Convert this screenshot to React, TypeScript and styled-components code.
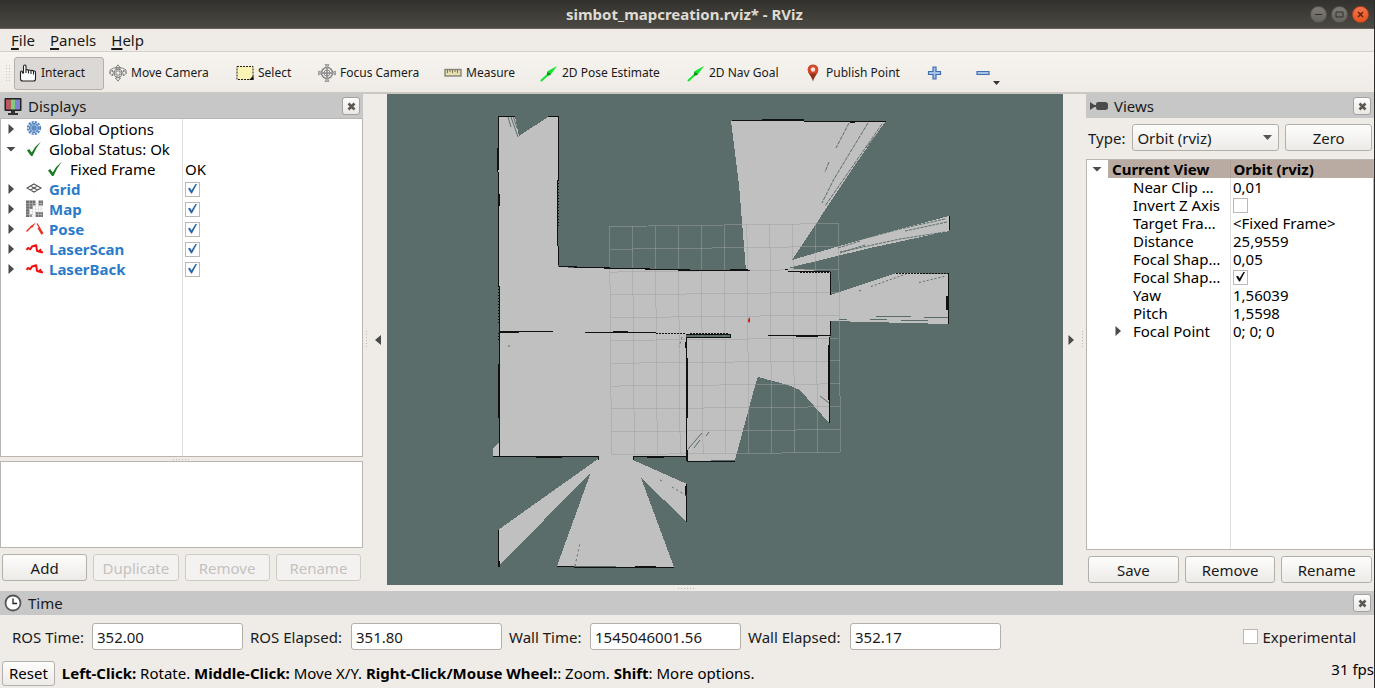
import React from "react";
import styled, { createGlobalStyle, css } from "styled-components";

const GlobalStyle = createGlobalStyle`
  *, *::before, *::after { box-sizing: border-box; }
  body {
    margin: 0;
    background: #efebe7;
    color: #1a1a1a;
    font-family: "Noto Sans", "Open Sans", sans-serif;
    font-size: 15px;
    line-height: 20px;
  }
  button, input, select { font: inherit; color: inherit; margin: 0; }
`;

const Window = styled.div`
  display: flex;
  flex-direction: column;
  min-height: 100vh;
  border-right: 1px solid #2b2b2b;
`;

const TitleBar = styled.header`
  display: grid;
  grid-template-columns: 1fr auto 1fr;
  align-items: center;
  height: 29px;
  padding-right: 5px;
  background: linear-gradient(#33312d, #4b4943);
  border-bottom: 1px solid #6b5f5a;
`;

const WindowTitle = styled.h1`
  grid-column: 2;
  margin: 0;
  font-size: 15px;
  line-height: 20px;
  font-weight: 700;
  color: #dfdbd2;
`;

const WindowControls = styled.div`
  display: flex;
  justify-content: flex-end;
  gap: 4px;
`;

const WindowButton = styled.button<{ $close?: boolean }>`
  display: flex;
  width: 17px;
  height: 17px;
  padding: 0;
  border: 1px solid ${(p) => (p.$close ? "#b5431c" : "#55534c")};
  border-radius: 50%;
  background: ${(p) => (p.$close ? "linear-gradient(#f4744b, #e6531f)" : "linear-gradient(#7d7b74, #65635c)")};
`;

const MenuBar = styled.nav`
  display: flex;
  align-items: center;
  gap: 15px;
  height: 23px;
  padding-left: 11px;
  border-bottom: 1px solid #d3cfca;
`;

const MenuButton = styled.button`
  padding: 0;
  border: 0;
  background: none;
  u { text-underline-offset: 2px; text-decoration-thickness: 2px; }
`;

const ToolBar = styled.div`
  display: flex;
  align-items: center;
  height: 42px;
  padding: 2px 0 0 5px;
  background: linear-gradient(#f7f4f0, #efebe6);
  border-bottom: 2px solid #cbc7c3;
`;

const Grip = styled.span`
  width: 5px;
  height: 18px;
  margin-right: 4px;
  background-image: radial-gradient(circle, #cbc6c0 1px, transparent 1px);
  background-size: 3px 3px;
`;

const Tool = styled.button<{ $width: number; $active?: boolean; $menu?: boolean }>`
  display: flex;
  align-items: center;
  gap: ${(p) => (p.$menu ? 0 : 4)}px;
  flex: none;
  width: ${(p) => p.$width}px;
  height: 33px;
  padding: 0 4px;
  border: 1px solid transparent;
  border-radius: 3px;
  background: none;
  font-size: 12px;
  white-space: nowrap;
  ${(p) =>
    p.$active &&
    css`
      border-color: #b3afab;
      background: #dcd8d5;
    `}
`;

const ToolIcon = styled.svg`
  flex: none;
  width: 18px;
  height: 18px;
`;

const MenuArrow = styled.svg`
  flex: none;
  align-self: flex-end;
  margin-bottom: 4px;
  width: 7px;
  height: 4px;
`;

const Main = styled.main`
  display: grid;
  grid-template-columns: 363px 24px minmax(0, 1fr) 23px 288px;
  flex: 1;
`;

const Dock = styled.section`
  display: flex;
  flex-direction: column;
  min-width: 0;
`;

const DockTitle = styled.header`
  display: flex;
  align-items: center;
  gap: 6px;
  flex: none;
  height: 24px;
  padding: 0 3px 0 4px;
  background: #c7c7c7;
  h2 { flex: 1; margin: 0; font-size: 15px; font-weight: 400; }
`;

const DockIcon = styled.svg`
  width: 18px;
  height: 18px;
`;

const CloseButton = styled.button`
  display: flex;
  align-items: center;
  justify-content: center;
  width: 18px;
  height: 18px;
  padding: 0;
  border: 1px solid #a5a19d;
  border-radius: 3px;
  background: linear-gradient(#fdfdfc, #ebe8e5);
`;

const TreePanel = styled.div<{ $split: number }>`
  flex: 1;
  min-height: 0;
  border: 1px solid #bab5b0;
  background: linear-gradient(#e0e0e0, #e0e0e0) ${(p) => p.$split}px 0 / 1px 100% no-repeat #fff;
`;

const Tree = styled.table<{ $first: number; $row: number }>`
  width: 100%;
  table-layout: fixed;
  border-collapse: collapse;
  color: #000;
  th, td {
    height: ${(p) => p.$row}px;
    padding: 0;
    line-height: ${(p) => p.$row}px;
    font-weight: 400;
    text-align: left;
    white-space: nowrap;
  }
  th { width: ${(p) => p.$first}px; }
  td { padding-left: 3px; }
`;

const Cell = styled.div<{ $pad: number }>`
  display: flex;
  align-items: center;
  padding-left: ${(p) => p.$pad}px;
`;

const Name = styled.span<{ $display?: boolean }>`
  ${(p) => p.$display && css`color: #2b7bc9; font-weight: 700;`}
`;

const Expander = styled.svg`
  flex: none;
  width: 12px;
  height: 12px;
`;

const RowIcon = styled.svg`
  flex: none;
  width: 18px;
  height: 18px;
  margin: 0 5px 0 9px;
`;

const CurrentRow = styled.tr`
  th, td { font-weight: 700; }
  th { background: linear-gradient(#b9aba1, #b9aba1) 21px 0 no-repeat; }
  td { background: #b9aba1; border-left: 1px solid #aea197; }
`;

const Check = styled.input<{ $tint?: string }>`
  appearance: none;
  display: block;
  width: 15px;
  height: 15px;
  border: 1px solid #bcb8b4;
  background: #fff;
  &:checked::after {
    content: "";
    display: block;
    width: 9px;
    height: 10px;
    margin: 1px 2px;
    background: ${(p) => p.$tint ?? "#111"};
    clip-path: polygon(0 50%, 22% 42%, 40% 68%, 86% 0, 100% 4%, 44% 100%, 34% 100%);
  }
`;

const SplitHandle = styled.div<{ $size: number }>`
  display: flex;
  align-items: center;
  justify-content: center;
  flex: none;
  height: ${(p) => p.$size}px;
`;

const Dots = styled.span<{ $vertical?: boolean }>`
  flex: none;
  width: ${(p) => (p.$vertical ? 1 : 18)}px;
  height: ${(p) => (p.$vertical ? 18 : 1)}px;
  background: repeating-linear-gradient(${(p) => (p.$vertical ? "180deg" : "90deg")}, #bdb8b3 0 1px, transparent 1px 3px);
`;

const SideStrip = styled.div<{ $reverse?: boolean }>`
  display: flex;
  flex-direction: ${(p) => (p.$reverse ? "row-reverse" : "row")};
  align-items: center;
  gap: 5px;
  padding: 0 3px;
`;

const CollapseButton = styled.button`
  display: flex;
  padding: 0;
  border: 0;
  background: none;
`;

const Description = styled.div`
  flex: none;
  height: 87px;
  border: 1px solid #bab5b0;
  background: #fff;
`;

const ButtonRow = styled.div<{ $bottom: number }>`
  display: flex;
  gap: 6px;
  flex: none;
  padding: 6px 2px ${(p) => p.$bottom}px;
`;

const PushButton = styled.button<{ $compact?: boolean }>`
  flex: ${(p) => (p.$compact ? "none" : "1 1 0")};
  height: ${(p) => (p.$compact ? 25 : 27)}px;
  padding: 0 6px;
  border: 1px solid #b3afab;
  border-radius: 3px;
  background: linear-gradient(#fdfdfc, #edebe8);
  line-height: 20px;
  &:disabled { color: #c4c1be; border-color: #cfcbc7; background: #f4f2f0; }
`;

const TypeRow = styled.div`
  display: flex;
  align-items: center;
  padding: 6px 2px 8px;
`;

const SelectBox = styled.div`
  display: flex;
  align-items: center;
  flex: 0 1 147px;
  height: 27px;
  margin: 0 6px 0 7px;
  border: 1px solid #b3afab;
  border-radius: 3px;
  background: linear-gradient(#fdfdfc, #edebe8);
  select {
    appearance: none;
    flex: 1;
    min-width: 0;
    height: 25px;
    padding: 0 4px;
    border: 0;
    background: none;
  }
  svg { width: 9px; height: 5px; margin-right: 6px; }
`;

const Viewport = styled.section`
  min-width: 0;
  background: #5a6d6a;
  svg { display: block; width: 100%; height: 100%; }
`;

const TimeRow = styled.form`
  display: flex;
  align-items: center;
  height: 43px;
  padding: 0 18px 0 12px;
`;

const TimeLabel = styled.label<{ $width: number }>`
  flex: none;
  width: ${(p) => p.$width}px;
  white-space: nowrap;
`;

const TimeInput = styled.input`
  flex: 0 1 151px;
  min-width: 0;
  height: 27px;
  margin-right: 7px;
  padding: 0 4px;
  border: 1px solid #b3afab;
  border-radius: 3px;
  background: #fff;
`;

const ExperimentalLabel = styled.label`
  display: flex;
  align-items: center;
  gap: 5px;
  margin-left: auto;
`;

const StatusBar = styled.footer`
  display: flex;
  align-items: center;
  gap: 7px;
  height: 30px;
  padding: 0 0 0 2px;
  color: #000;
`;

const HelpText = styled.p`
  flex: 1;
  margin: 0;
`;

const Fps = styled.output`
  align-self: flex-start;
  padding-top: 1px;
`;

const Cross = () => (
  <svg width="9" height="9" viewBox="0 0 9 9" aria-hidden="true">
    <path d="M1.500 1.500 7.500 7.500M7.500 1.500 1.500 7.500" stroke="#5c5955" strokeWidth="2.600" />
  </svg>
);

const Arrow = ({ dir }: { dir: "right" | "down" | "left" }) => (
  <path
    d={dir === "right" ? "M3.500 1v10L9 6z" : dir === "left" ? "M9 1v10L3 6z" : "M1.500 4h9L6 8.500z"}
    fill="#4a4a4a"
  />
);

const arrowGreen = (
  <>
    <path d="M1.500 16.500 9 9.500" stroke="#12e62f" strokeWidth="2" strokeLinecap="round" />
    <path d="M17 2 7 7.500 8.500 8.500 8 11.500 11.500 9.500z" fill="#12e62f" />
    <path d="M7 8 10 9l1 2-4 .5z" fill="#0b8f1e" />
  </>
);

const toolIcons: Record<string, React.ReactNode> = {
  hand: (
    <path
      d="M4.500 9.500V2.500Q4.500 1 5.800 1T7 2.500V6q1.300-.8 2.500.3 1.300-.8 2.500.3 1.300-.7 2.500.4 2-.4 2 1.500V15q0 2-2 2H4Q1.500 17 1.500 15V8.500Q1.500 7 2.500 7 3.500 7 3.500 9.500M7 6v3M9.500 6.500v3M12 7v3M14.500 7.500v3"
      fill="#fff"
      stroke="#222"
      strokeWidth="1.100"
    />
  ),
  move: (
    <g fill="#f4f2ef" stroke="#777" strokeWidth=".9">
      <path d="M9 .8 11.500 4H10v4h4.500V6L17.500 9l-3 3v-2H10v4h1.500L9 17.200 6.500 14H8v-4H3.500v2l-3-3 3-3v2H8V4H6.500z" />
      <path d="M1 6q3-2.500 8-2.500T17 6v3.500M1 6v3.500M5 9q0-4 4-4t4 4q0 4-4 5-4-1-4-5z" fill="none" />
    </g>
  ),
  select: (
    <>
      <rect x="1" y="2.500" width="16" height="13" fill="#fbf4b5" stroke="#222" strokeDasharray="2 1" />
      <path d="M17.500 11.500v4.500h-4.500z" fill="#111" />
    </>
  ),
  focus: (
    <g fill="none" stroke="#8b8b8b">
      <circle cx="9" cy="9" r="5.500" strokeWidth="1.500" />
      <circle cx="9" cy="9" r="3" />
      <path d="M7 .5h4L9.500 4v10l1.500 3.500H7L8.500 14V4zM.5 7v4L4 9.500h10l3.500 1.500V7L14 8.500H4z" fill="#b5b5b5" strokeWidth=".7" />
    </g>
  ),
  ruler: (
    <>
      <rect x="1" y="5.500" width="16" height="6.500" fill="#e7dfae" stroke="#85827b" strokeWidth="1.400" />
      <path d="M3.500 6v3M6 6v2M8.500 6v3M11 6v2M13.500 6v3" stroke="#77735f" />
    </>
  ),
  arrow: arrowGreen,
  pin: (
    <>
      <path d="M6 .8C2.700.8.8 3 .8 6 .8 9.500 4.500 12 6 17.500 7.500 12 11.200 9.500 11.200 6 11.200 3 9.300.8 6 .8z" fill="#8c3519" />
      <path d="M6 .8C2.700.8.8 3 .8 6q0 2 1.200 3.500h8Q11.200 8 11.200 6c0-3-1.900-5.200-5.200-5.200z" fill="#d5492a" />
      <circle cx="6" cy="5.500" r="2.200" fill="#f5e5df" />
    </>
  ),
};

const tools = [
  { icon: "hand", label: "Interact", width: 90, active: true },
  { icon: "move", label: "Move Camera", width: 127 },
  { icon: "select", label: "Select", width: 82 },
  { icon: "focus", label: "Focus Camera", width: 126 },
  { icon: "ruler", label: "Measure", width: 96 },
  { icon: "arrow", label: "2D Pose Estimate", width: 147 },
  { icon: "arrow", label: "2D Nav Goal", width: 117 },
  { icon: "pin", label: "Publish Point", width: 122 },
];

const rowIcons: Record<string, React.ReactNode> = {
  gear: (
    <g fill="none" stroke="#4d80bd" transform="translate(-1 -1)">
      <circle cx="9" cy="9" r="6.200" strokeWidth="1.800" strokeDasharray="2.200 1.050" />
      <circle cx="9" cy="9" r="4.500" fill="#9dbce0" strokeWidth="1.200" />
      <circle cx="9" cy="9" r="1.800" fill="#e8f0f9" />
      <path d="M9 4v10M4 9h10M5.500 5.500l7 7M12.500 5.500l-7 7" strokeWidth=".7" />
    </g>
  ),
  check: <path d="M1 10.500 3.200 9l2.500 3.500Q9 6 15 1.500 10 7.500 6.500 16H5z" fill="#1d7a25" />,
  grid: (
    <path
      d="M8 4 15 8 8 12 1 8zM4.500 6l7 4M11.500 6l-7 4"
      fill="none"
      stroke="#555"
      strokeWidth="1.100"
    />
  ),
  map: (
    <>
      <path d="M0 .5h9.500v5H7V9H3.500v8H0zM12.500.5H17v5h-4.500zM9.500 12H17v5H9.500z" fill="#6f6f6f" />
      <path d="M3.500 14H6v3H3.500z" fill="#999" />
      <path d="M3.500 .5v16.500M6.500 .5v16.500M9.500 5v12M12.500 .5v16.500M15 .5v16.500M0 3.500h17M0 6h17M0 9h17M0 12h17M0 14.500h17" stroke="#ccc" strokeWidth=".5" />
    </>
  ),
  pose: (
    <g fill="none" stroke="#e8321a">
      <path d="M.5 11.500 5 7" strokeWidth="1.500" />
      <path d="M10 2.500 4 6.500 6 8z" fill="#e8321a" stroke="none" />
      <path d="M11 3.500 14 8.500" strokeWidth="1.300" />
      <path d="M12.500 7.500 16.500 14" strokeWidth="2.400" />
    </g>
  ),
  laser: (
    <path
      d="M.5 10 2 8l2.300 1.200L6 6.500l4.200-1.200L11 10.800l2.500 1 .8-2 .7 2.400h2"
      fill="none"
      stroke="#f01010"
      strokeWidth="2"
      strokeLinejoin="round"
    />
  ),
};

type DisplayRow = { name: string; icon: string; arrow?: "right" | "down"; child?: boolean; value?: string; display?: boolean };

const displayRows: DisplayRow[] = [
  { name: "Global Options", icon: "gear", arrow: "right" },
  { name: "Global Status: Ok", icon: "check", arrow: "down" },
  { name: "Fixed Frame", icon: "check", child: true, value: "OK" },
  { name: "Grid", icon: "grid", arrow: "right", display: true },
  { name: "Map", icon: "map", arrow: "right", display: true },
  { name: "Pose", icon: "pose", arrow: "right", display: true },
  { name: "LaserScan", icon: "laser", arrow: "right", display: true },
  { name: "LaserBack", icon: "laser", arrow: "right", display: true },
];

const viewRows: { name: string; value?: string; checked?: boolean; arrow?: boolean }[] = [
  { name: "Near Clip …", value: "0,01" },
  { name: "Invert Z Axis", checked: false },
  { name: "Target Fra…", value: "<Fixed Frame>" },
  { name: "Distance", value: "25,9559" },
  { name: "Focal Shap…", value: "0,05" },
  { name: "Focal Shap…", checked: true },
  { name: "Yaw", value: "1,56039" },
  { name: "Pitch", value: "1,5598" },
  { name: "Focal Point", value: "0; 0; 0", arrow: true },
];

const times = [
  { label: "ROS Time:", value: "352.00", width: 80 },
  { label: "ROS Elapsed:", value: "351.80", width: 101 },
  { label: "Wall Time:", value: "1545046001.56", width: 81 },
  { label: "Wall Elapsed:", value: "352.17", width: 102 },
];

const gridSteps = Array.from({ length: 11 }, (_, i) => i / 10);
const mix = (a: number, b: number, t: number) => a + (b - a) * t;

const MapView = () => (
  <svg viewBox="387 94 676 491" preserveAspectRatio="xMidYMid meet" role="img" aria-label="Occupancy map">
    <g shapeRendering="crispEdges">
      <path
        fill="#c0c0c0"
        d="M498 116H515L519 136 548 117H558V267L577 268 647 269 746 270.500 739 185 731 120.500 885 122 855 165 792 260 870 237 949 216V231L870 248 788 268 830 272V295L896 273 948 274V324L830 321V336L829 423 800 390 788 385 758 377 756 382 735 460 687 461V457H633V460L687 484V522L641 478 674 567 557 566 591 472 499 566 498 530 598 459V457H493V448L499 443z"
      />
      <path fill="#5a6d6a" d="M686 335H730V337H686z" />
    </g>
    <g stroke="#a0a0a4" strokeOpacity=".5" strokeWidth="1" shapeRendering="crispEdges">
      {gridSteps.map((t) => (
        <React.Fragment key={t}>
          <line x1={mix(609.5, 838.5, t)} y1={mix(226.5, 223.5, t)} x2={mix(611.5, 840.5, t)} y2={mix(454.5, 452.5, t)} />
          <line x1={mix(609.5, 611.5, t)} y1={mix(226.5, 454.5, t)} x2={mix(838.5, 840.5, t)} y2={mix(223.5, 452.5, t)} />
        </React.Fragment>
      ))}
    </g>
    <g fill="none" stroke="#111" shapeRendering="crispEdges">
      <path d="M498.500 116V150M497.500 148V172M498.500 172V286M499.500 286V456M558.500 117V180M557.500 180V246M558.500 246V265M686.500 338V460M829.500 337V423M830.500 272V295M830.500 321V336M948.500 274V324M949.500 216V230M498.500 530V566M686.500 484V522" />
      <path d="M498 116.500H515M548 116.500H559M732 120.500H804M804 121.500H886M557 566.500H574M574 567.500H674M687 461.500H735M493 456.500H598M633 456.500H687M686 337.500H731M686 334.500H730M730.500 334V338M500 331.500H553M585 332.500H656M768 335.500H830M785 269.500H788M788 271.500H830M598.500 456V460M633.500 456V460" />
      <path d="M559 266.500H577M574 267.500H610M604 268.500H650M645 269.500H690M678 270.500H750" />
      <path d="M500 332H519M613 332H628M762 120H804M850 122H855M536 457H562M635 567H656M647 457H664M730 270H748M796 336H818" strokeWidth="2" />
      <path d="M656 333.500H686M690 333.500H728M800 272.500H830M896 273.500H949" strokeDasharray="2 1" />
      <path d="M499 364V418M686 342V348M687 358V418M687 450V461M829 345V400M498 148V170M499 194V206M947 296V310M686 486V496M499 561V567" strokeWidth="2" />
      <path d="M558 180V226M499 286V324M499 333V342" strokeWidth="2" strokeDasharray="1 2" />
    </g>
    <g fill="none" stroke="#5a6d6a" strokeWidth="1">
      <path d="M508 117 511 127M511 117 518 137M513.500 117 517 128" />
      <path d="M702 433 688 449M700 440 694 448M709 432 706 436M820 396 829 403" />
      <path d="M868 123 834 179 822 203M882 124 850 170 825 206M849 123 836 148M829 162 825 172M886 123 866 148" strokeDasharray="4 1" />
      <path d="M945 219 900 229 840 245 815 251M947 222 905 231M945 232 900 239 840 252M860 241 838 248M865 245 840 253" strokeDasharray="3 1" />
      <path d="M871 286.500 906 274M919 282.500 946 276M859 291 862 290" strokeDasharray="2 2" />
      <path d="M876 316.500H911M924 317.500H948M839 319.500H847M870 319.500H887M901 320.500H928M875 323.500H925" />
      <path d="M660 480 664 482M672 487 687 496M575 566 580 543M682 337 679 347M509 345V347" strokeDasharray="2 3" />
    </g>
    <path d="M748 319.500 750 317v5.500l-2-.5z" fill="#d32113" />
  </svg>
);

const DockHeader = ({ title, icon }: { title: string; icon: React.ReactNode }) => (
  <DockTitle>
    <DockIcon viewBox="0 0 18 18" aria-hidden="true">{icon}</DockIcon>
    <h2>{title}</h2>
    <CloseButton type="button" aria-label={`Close ${title}`}><Cross /></CloseButton>
  </DockTitle>
);

const monitorIcon = (
  <>
    <path d="M7 14h4v2h3v2H4v-2h3z" fill="#333" />
    <rect x=".5" y="1" width="17" height="13" rx="1" fill="#222" />
    <path d="M2 2.500h5v10H2z" fill="#b75b60" />
    <path d="M7 2.500h4v10H7z" fill="#7fca7b" />
    <path d="M11 2.500h5v10h-5z" fill="#8181d2" />
  </>
);
const cameraIcon = (
  <path d="M0 5v8l4.500-3H6q0 3 2 3h7q3 0 3-2.500v-3Q18 5 15 5H8Q6 5 6 8H4.500z" fill="#4a4a4a" />
);
const clockIcon = (
  <>
    <circle cx="9" cy="9" r="7.500" fill="#fff" stroke="#555" strokeWidth="1.800" />
    <path d="M9 4.500V9.500h4" fill="none" stroke="#222" strokeWidth="1.300" />
  </>
);

export default function App() {
  return (
    <>
      <GlobalStyle />
      <Window>
        <TitleBar>
          <WindowTitle>simbot_mapcreation.rviz* - RViz</WindowTitle>
          <WindowControls>
            <WindowButton type="button" aria-label="Minimize">
              <svg viewBox="0 0 15 15"><path d="M4 7.500h7" stroke="#33312d" /></svg>
            </WindowButton>
            <WindowButton type="button" aria-label="Maximize">
              <svg viewBox="0 0 15 15"><path d="M4 5h7v5H4z" fill="none" stroke="#33312d" /></svg>
            </WindowButton>
            <WindowButton type="button" aria-label="Close" $close>
              <svg viewBox="0 0 15 15"><path d="m5 5 5 5m0-5-5 5" stroke="#5a200c" strokeWidth="1.300" /></svg>
            </WindowButton>
          </WindowControls>
        </TitleBar>

        <MenuBar>
          <MenuButton type="button"><u>F</u>ile</MenuButton>
          <MenuButton type="button"><u>P</u>anels</MenuButton>
          <MenuButton type="button"><u>H</u>elp</MenuButton>
        </MenuBar>

        <ToolBar role="toolbar">
          <Grip />
          {tools.map((t) => (
            <Tool key={t.label} type="button" $width={t.width} $active={t.active}>
              <ToolIcon viewBox={t.icon === "pin" ? "-3 0 18 18" : "0 0 18 18"} aria-hidden="true">{toolIcons[t.icon]}</ToolIcon>
              {t.label}
            </Tool>
          ))}
          <Tool type="button" aria-label="Add tool" $width={49}>
            <ToolIcon viewBox="0 0 18 18">
              <path d="M7 3h3v4.500h4.500v3H10V15H7v-4.500H2.500v-3H7z" fill="#a5c3e8" stroke="#3f6fb0" strokeWidth="1.200" />
            </ToolIcon>
          </Tool>
          <Tool type="button" aria-label="Remove tool" $width={36} $menu>
            <ToolIcon viewBox="0 0 18 18">
              <path d="M2 7.500h12v3H2z" fill="#a5c3e8" stroke="#3f6fb0" strokeWidth="1.200" />
            </ToolIcon>
            <MenuArrow viewBox="0 0 7 4"><path d="M0 0h7L3.500 4z" fill="#333" /></MenuArrow>
          </Tool>
        </ToolBar>

        <Main>
          <Dock>
            <DockHeader title="Displays" icon={monitorIcon} />
            <TreePanel $split={181}>
              <Tree $first={181} $row={20}>
                <tbody>
                  {displayRows.map((r) => (
                    <tr key={r.name}>
                      <th scope="row">
                        <Cell $pad={r.child ? 25 : 4}>
                          <Expander viewBox="0 0 12 12">{r.arrow && <Arrow dir={r.arrow} />}</Expander>
                          <RowIcon viewBox="0 0 18 18">{rowIcons[r.icon]}</RowIcon>
                          <Name $display={r.display}>{r.name}</Name>
                        </Cell>
                      </th>
                      <td>
                        {r.display ? <Check type="checkbox" defaultChecked aria-label={r.name} $tint="#2a68ab" /> : r.value}
                      </td>
                    </tr>
                  ))}
                </tbody>
              </Tree>
            </TreePanel>
            <SplitHandle $size={4}><Dots /></SplitHandle>
            <Description />
            <ButtonRow $bottom={4}>
              <PushButton type="button">Add</PushButton>
              <PushButton type="button" disabled>Duplicate</PushButton>
              <PushButton type="button" disabled>Remove</PushButton>
              <PushButton type="button" disabled>Rename</PushButton>
            </ButtonRow>
          </Dock>

          <SideStrip>
            <Dots $vertical />
            <CollapseButton type="button" aria-label="Collapse left panel">
              <Expander viewBox="0 0 12 12"><Arrow dir="left" /></Expander>
            </CollapseButton>
          </SideStrip>

          <Viewport><MapView /></Viewport>

          <SideStrip $reverse>
            <Dots $vertical />
            <CollapseButton type="button" aria-label="Collapse right panel">
              <Expander viewBox="0 0 12 12"><Arrow dir="right" /></Expander>
            </CollapseButton>
          </SideStrip>

          <Dock>
            <DockHeader title="Views" icon={cameraIcon} />
            <TypeRow>
              <label htmlFor="view-type">Type:</label>
              <SelectBox>
                <select id="view-type"><option>Orbit (rviz)</option></select>
                <svg viewBox="0 0 9 5"><path d="M0 0h9L4.500 5z" fill="#555" /></svg>
              </SelectBox>
              <PushButton type="button">Zero</PushButton>
            </TypeRow>
            <TreePanel $split={143}>
              <Tree $first={143} $row={18}>
                <tbody>
                  <CurrentRow>
                    <th scope="row">
                      <Cell $pad={4}>
                        <Expander viewBox="0 0 12 12"><Arrow dir="down" /></Expander>
                        <Cell $pad={9}>Current View</Cell>
                      </Cell>
                    </th>
                    <td>Orbit (rviz)</td>
                  </CurrentRow>
                  {viewRows.map((r, i) => (
                    <tr key={i}>
                      <th scope="row">
                        <Cell $pad={25}>
                          <Expander viewBox="0 0 12 12">{r.arrow && <Arrow dir="right" />}</Expander>
                          <Cell $pad={9}>{r.name}</Cell>
                        </Cell>
                      </th>
                      <td>
                        {r.value ?? <Check type="checkbox" defaultChecked={r.checked} aria-label={r.name} />}
                      </td>
                    </tr>
                  ))}
                </tbody>
              </Tree>
            </TreePanel>
            <ButtonRow $bottom={2}>
              <PushButton type="button">Save</PushButton>
              <PushButton type="button">Remove</PushButton>
              <PushButton type="button">Rename</PushButton>
            </ButtonRow>
          </Dock>
        </Main>

        <SplitHandle $size={6}><Dots /></SplitHandle>

        <section>
          <DockHeader title="Time" icon={clockIcon} />
          <TimeRow>
            {times.map((t, i) => (
              <React.Fragment key={t.label}>
                <TimeLabel htmlFor={`time-${i}`} $width={t.width}>{t.label}</TimeLabel>
                <TimeInput id={`time-${i}`} defaultValue={t.value} />
              </React.Fragment>
            ))}
            <ExperimentalLabel>
              <Check type="checkbox" />
              Experimental
            </ExperimentalLabel>
          </TimeRow>
        </section>

        <StatusBar>
          <PushButton type="button" $compact>Reset</PushButton>
          <HelpText>
            <b>Left-Click:</b> Rotate. <b>Middle-Click:</b> Move X/Y. <b>Right-Click/Mouse Wheel:</b>: Zoom. <b>Shift</b>: More options.
          </HelpText>
          <Fps>31 fps</Fps>
        </StatusBar>
      </Window>
    </>
  );
}
